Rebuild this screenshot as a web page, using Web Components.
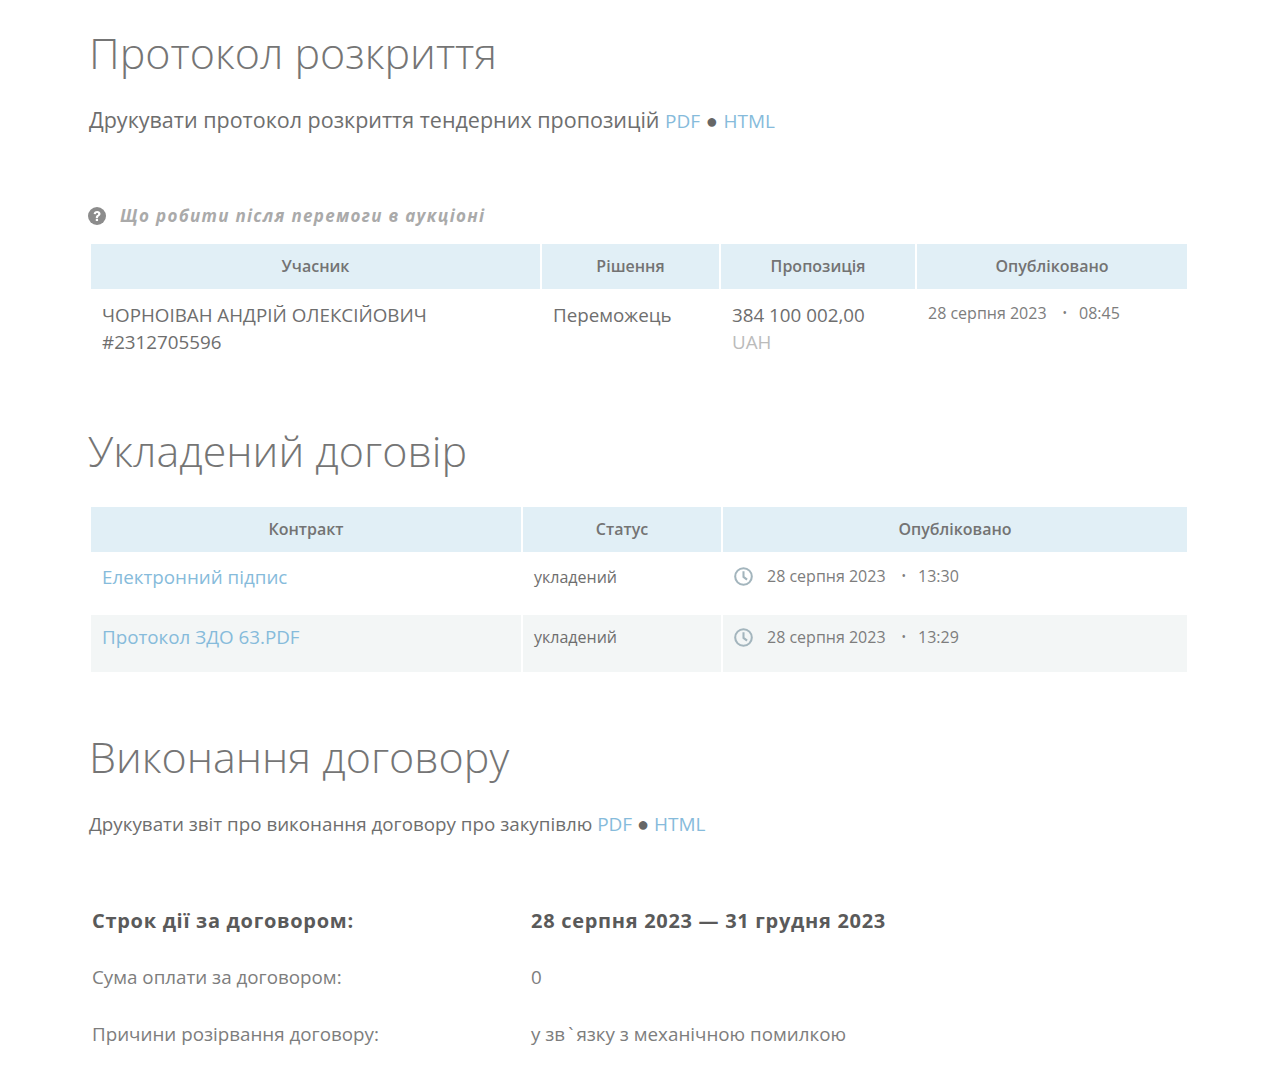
<!DOCTYPE html>
<html lang="uk">
<head>
<meta charset="utf-8">
<title>Протокол розкриття</title>
<style>
  html, body { margin: 0; background: #fff; }
  body { font-family: "Open Sans", "Noto Sans", sans-serif; color: #666; }
</style>
</head>
<body>
<tender-page>
  <section-title style="--pl:1px; --top:26px">Протокол розкриття</section-title>
  <print-line style="--top:26px; --size:21.5px">Друкувати протокол розкриття тендерних пропозицій <a>PDF</a> <b>●</b> <a>HTML</a></print-line>
  <help-link style="--top:70px">Що робити після перемоги в аукціоні</help-link>

  <data-table style="--cols:449px 177px 194px 270px; --top:17px">
    <table-head>Учасник</table-head>
    <table-head>Рішення</table-head>
    <table-head>Пропозиція</table-head>
    <table-head>Опубліковано</table-head>
    <table-cell h="88" pad>ЧОРНОІВАН АНДРІЙ ОЛЕКСІЙОВИЧ<br>#2312705596</table-cell>
    <table-cell h="88" pad>Переможець</table-cell>
    <table-cell h="88" pad>384 100 002,00<br><money-unit>UAH</money-unit></table-cell>
    <table-cell h="88"><date-time date="28 серпня 2023" time="08:45"></date-time></table-cell>
  </data-table>

  <section-title style="--top:47px">Укладений договір</section-title>

  <data-table style="--cols:430px 198px 464px; --top:29px">
    <table-head>Контракт</table-head>
    <table-head>Статус</table-head>
    <table-head>Опубліковано</table-head>
    <table-cell h="61"><a-link>Електронний підпис</a-link></table-cell>
    <table-cell h="61" small>укладений</table-cell>
    <table-cell h="61"><date-time clock date="28 серпня 2023" time="13:30"></date-time></table-cell>
    <table-cell h="57" alt><a-link>Протокол ЗДО 63.PDF</a-link></table-cell>
    <table-cell h="57" alt small>укладений</table-cell>
    <table-cell h="57" alt dated><date-time clock date="28 серпня 2023" time="13:29"></date-time></table-cell>
  </data-table>

  <section-title style="--pl:1px; --top:58px">Виконання договору</section-title>
  <print-line style="--top:26px; --size:18.8px">Друкувати звіт про виконання договору про закупівлю <a>PDF</a> <b>●</b> <a>HTML</a></print-line>

  <info-list style="--top:69px">
    <info-row strong label="Строк дії за договором:">28 серпня 2023 — 31 грудня 2023</info-row>
    <info-row label="Сума оплати за договором:">0</info-row>
    <info-row label="Причини розірвання договору:">у зв<span style="margin:0 3px">`</span>язку з механічною помилкою</info-row>
  </info-list>
</tender-page>

<script>
  function define(name, css, html) {
      customElements.define(name, class extends HTMLElement {
          constructor() {
              super();
              this.attachShadow({ mode: 'open' });
              this.shadowRoot.innerHTML = `<style>${css}</style>${typeof html === 'function' ? html(this) : html}`;
          }
      });
  }

  define('tender-page', `
      :host { display: block; padding: 0 91px 0 88px; height: 1084px; overflow: hidden; }
  `, '<slot></slot>');

  define('section-title', `
      :host {
          display: block;
          margin-top: var(--top, 0);
          padding-left: var(--pl, 0);
          font-weight: 300;
          font-size: 43px;
          line-height: 54px;
          color: #757575;
      }
  `, '<slot></slot>');

  define('print-line', `
      :host {
          display: block;
          margin-top: var(--top, 0);
          padding-left: 1px;
          font-size: var(--size, 18px);
          line-height: 28px;
          color: #6e6e6e;
      }
      ::slotted(a) { color: #86bbdb; font-size: 19px; }
      ::slotted(b) { font-weight: 400; font-size: 20px; line-height: 1; color: #666; }
  `, '<slot></slot>');

  define('help-link', `
      :host {
          display: flex;
          align-items: center;
          gap: 14px;
          margin-top: var(--top, 0);
          font-size: 17px;
          letter-spacing: 1.3px;
          line-height: 22px;
          font-style: italic;
          font-weight: 700;
          color: #aaa;
      }
      svg { width: 18px; height: 18px; flex: none; }
  `, `<svg viewBox="0 0 24 24"><circle cx="12" cy="12" r="12" fill="#8c8c8c"/><path d="M7.500 9.400c.2-2.600 2.200-4.100 4.700-4.100 2.600 0 4.500 1.400 4.500 3.800 0 1.700-1 2.600-2.100 3.300-.9.600-1.200 1-1.200 2.100h-3c0-2 .7-2.900 1.900-3.700.8-.6 1.300-.9 1.300-1.600 0-.7-.6-1.200-1.500-1.200-1 0-1.500.6-1.600 1.600z" fill="#fff"/><rect x="10.400" y="15.700" width="3" height="3" fill="#fff"/></svg><slot></slot>`);

  define('data-table', `
      :host {
          display: grid;
          grid-template-columns: var(--cols);
          gap: 0 2px;
          margin-top: var(--top, 0);
          margin-left: 3px;
      }
  `, '<slot></slot>');

  define('table-head', `
      :host {
          display: flex;
          align-items: center;
          justify-content: center;
          box-sizing: border-box;
          height: 45px;
          padding-bottom: 2px;
          background: #e1eff6;
          font-size: 16px;
          font-weight: 600;
          color: #737373;
      }
  `, '<slot></slot>');

  define('table-cell', `
      :host {
          display: block;
          box-sizing: border-box;
          padding: 12px 11px 0;
          font-size: 18.8px;
          line-height: 27px;
          color: #6e6e6e;
      }
      :host([pad]) { padding-top: 13px; }
      :host([alt]) { background: #f3f6f6; margin-top: 2px; padding-top: 9px; }
      :host([dated]) { padding-top: 10px; }
      :host([small]) { font-size: 16px; }
      :host([h="88"]) { height: 88px; }
      :host([h="61"]) { height: 61px; }
      :host([h="57"]) { height: 57px; }
  `, '<slot></slot>');

  define('a-link', `:host { color: #86bbdb; }`, '<slot></slot>');
  define('money-unit', `:host { color: #bbb; }`, '<slot></slot>');

  define('date-time', `
      :host {
          display: flex;
          align-items: center;
          font-size: 16px;
          line-height: 24px;
          color: #7d7d7d;
      }
      svg { width: 19px; height: 19px; margin-right: 14px; flex: none; }
      i { font-style: normal; margin: 0 12px 0 16px; font-size: 12px; }
  `, (el) => `${el.hasAttribute('clock') ? '<svg viewBox="0 0 24 24" fill="none" stroke="#a3b5bd" stroke-width="2.600"><circle cx="12" cy="12" r="10.500"/><path d="M12 5.500V12.500L16.500 16"/></svg>' : ''}<span>${el.getAttribute('date')}</span><i>•</i><span>${el.getAttribute('time')}</span>`);

  define('info-list', `
      :host {
          display: block;
          margin-top: var(--top, 0);
          margin-left: 4px;
      }
  `, '<slot></slot>');

  define('info-row', `
      :host {
          display: grid;
          grid-template-columns: 439px 1fr;
          height: 57px;
          font-size: 18.8px;
          line-height: 27px;
          color: #7d7d7d;
      }
      :host([strong]) { font-weight: 700; color: #5a5a5a; font-size: 20px; letter-spacing: .7px; }
  `, (el) => `<span>${el.getAttribute('label')}</span><span><slot></slot></span>`);
</script>
</body>
</html>
